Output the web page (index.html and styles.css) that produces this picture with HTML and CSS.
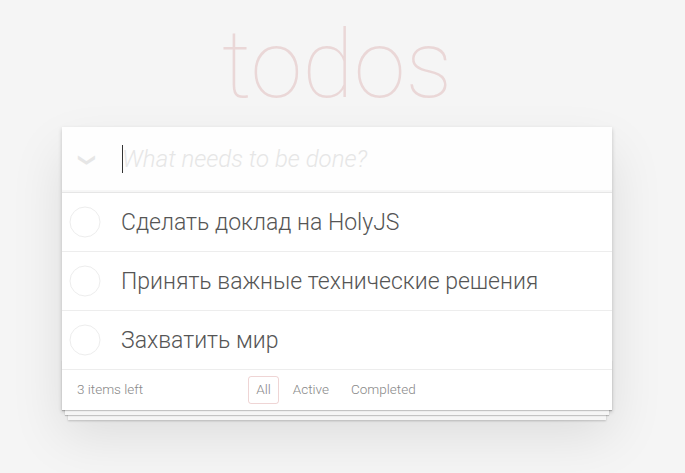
FILE: index.html
```html
<!DOCTYPE html>
<html lang="ru">
<head>
<meta charset="utf-8">
<title>todos</title>
<link rel="stylesheet" href="styles.css">
</head>
<body>
<section class="todoapp">
  <header class="header">
    <h1 class="title">todos</h1>
    <div class="new-row">
      <span class="toggle-all">❯</span>
      <div class="input-wrap">
        <input class="new-todo" placeholder="What needs to be done?">
        <span class="caret"></span>
      </div>
    </div>
  </header>
  <ul class="todo-list">
    <li class="todo">
      <span class="check"><svg width="32" height="32" viewBox="0 0 32 32"><circle cx="16" cy="16" r="15" fill="none" stroke="#ededed" stroke-width="1"/></svg></span>
      <label class="todo-label">Сделать доклад на HolyJS</label>
    </li>
    <li class="todo">
      <span class="check"><svg width="32" height="32" viewBox="0 0 32 32"><circle cx="16" cy="16" r="15" fill="none" stroke="#ededed" stroke-width="1"/></svg></span>
      <label class="todo-label">Принять важные технические решения</label>
    </li>
    <li class="todo">
      <span class="check"><svg width="32" height="32" viewBox="0 0 32 32"><circle cx="16" cy="16" r="15" fill="none" stroke="#ededed" stroke-width="1"/></svg></span>
      <label class="todo-label">Захватить мир</label>
    </li>
  </ul>
  <footer class="footer">
    <span class="todo-count">3 items left</span>
    <ul class="filters">
      <li><a class="filter selected">All</a></li>
      <li><a class="filter">Active</a></li>
      <li><a class="filter">Completed</a></li>
    </ul>
    <span class="spacer"></span>
  </footer>
</section>
</body>
</html>
```

FILE: styles.css
```css
html {
  background: #f5f5f5;
  min-height: 100%;
}
body {
  margin: 0;
  padding: 1px 0 0 0;
  min-height: 473px;
  box-sizing: border-box;
  font-family: "Roboto", "Liberation Sans", sans-serif;
  font-size: 14px;
  line-height: 1.4em;
  color: #4d4d4d;
  font-weight: 300;
}
.todoapp {
  background: #fff;
  width: 550px;
  margin: 126px 0 0 62px;
  position: relative;
  box-shadow: 0 2px 4px 0 rgba(0,0,0,0.2), 0 25px 50px 0 rgba(0,0,0,0.1);
}
.header { position: relative; }
.title {
  position: absolute;
  top: -109px;
  left: 0; right: 0;
  margin: 0;
  text-align: center;
  font-size: 94px;
  line-height: 1;
  font-weight: 100;
  color: rgba(175,47,47,0.15);
}
.new-row {
  display: flex;
  align-items: center;
  height: 65px;
  background: rgba(0,0,0,0.003);
  box-shadow: inset 0 -2px 1px rgba(0,0,0,0.03);
}
.toggle-all {
  width: 50px;
  margin-right: 10px;
  text-align: center;
  transform: rotate(90deg);
  font-size: 17px;
  color: #e6e6e6;
  line-height: 1;
}
.input-wrap { position: relative; flex: 1; }
.new-todo {
  width: 100%;
  box-sizing: border-box;
  border: 0;
  outline: none;
  background: transparent;
  font-family: inherit;
  font-size: 24px;
  font-weight: 300;
  color: #4d4d4d;
  padding: 0;
  line-height: 1.4em;
}
.new-todo::placeholder { font-style: italic; font-weight: 300; color: #e6e6e6; }
.caret {
  position: absolute;
  left: 0;
  top: 2px;
  width: 1px;
  height: 28px;
  background: #333;
}
.todo-list { list-style: none; margin: 0; padding: 0; border-top: 1px solid #e6e6e6; }
.todo {
  display: flex;
  align-items: center;
  height: 58px;
  border-bottom: 1px solid #ededed;
}
.check { width: 59px; height: 40px; padding-left: 7px; box-sizing: border-box; display: flex; align-items: center; }
.todo-label {
  font-size: 23px;
  line-height: 1.2;
  padding-top: 2px;
  color: #555;
}
.footer {
  display: flex;
  align-items: center;
  justify-content: space-between;
  color: #777;
  padding: 10px 15px;
  height: 20px;
  font-size: 13.5px;
  position: relative;
}
.footer::before {
  content: "";
  position: absolute;
  right: 0; bottom: 0; left: 0;
  height: 50px;
  overflow: hidden;
  box-shadow: 0 1px 1px rgba(0,0,0,0.2), 0 8px 0 -3px #f6f6f6, 0 9px 1px -3px rgba(0,0,0,0.2), 0 16px 0 -6px #f6f6f6, 0 17px 2px -6px rgba(0,0,0,0.2);
}
.todo-count { width: 120px; position: relative; color: #888; }
.filters { display: flex; list-style: none; margin: 0 2px 0 0; padding: 0; position: relative; }
.filter {
  display: block;
  margin: 3px;
  padding: 3px 7px;
  border: 1px solid transparent;
  border-radius: 3px;
  color: #888;
}
.filter.selected { border-color: rgba(175,47,47,0.2); }
.spacer { width: 120px; }
```
